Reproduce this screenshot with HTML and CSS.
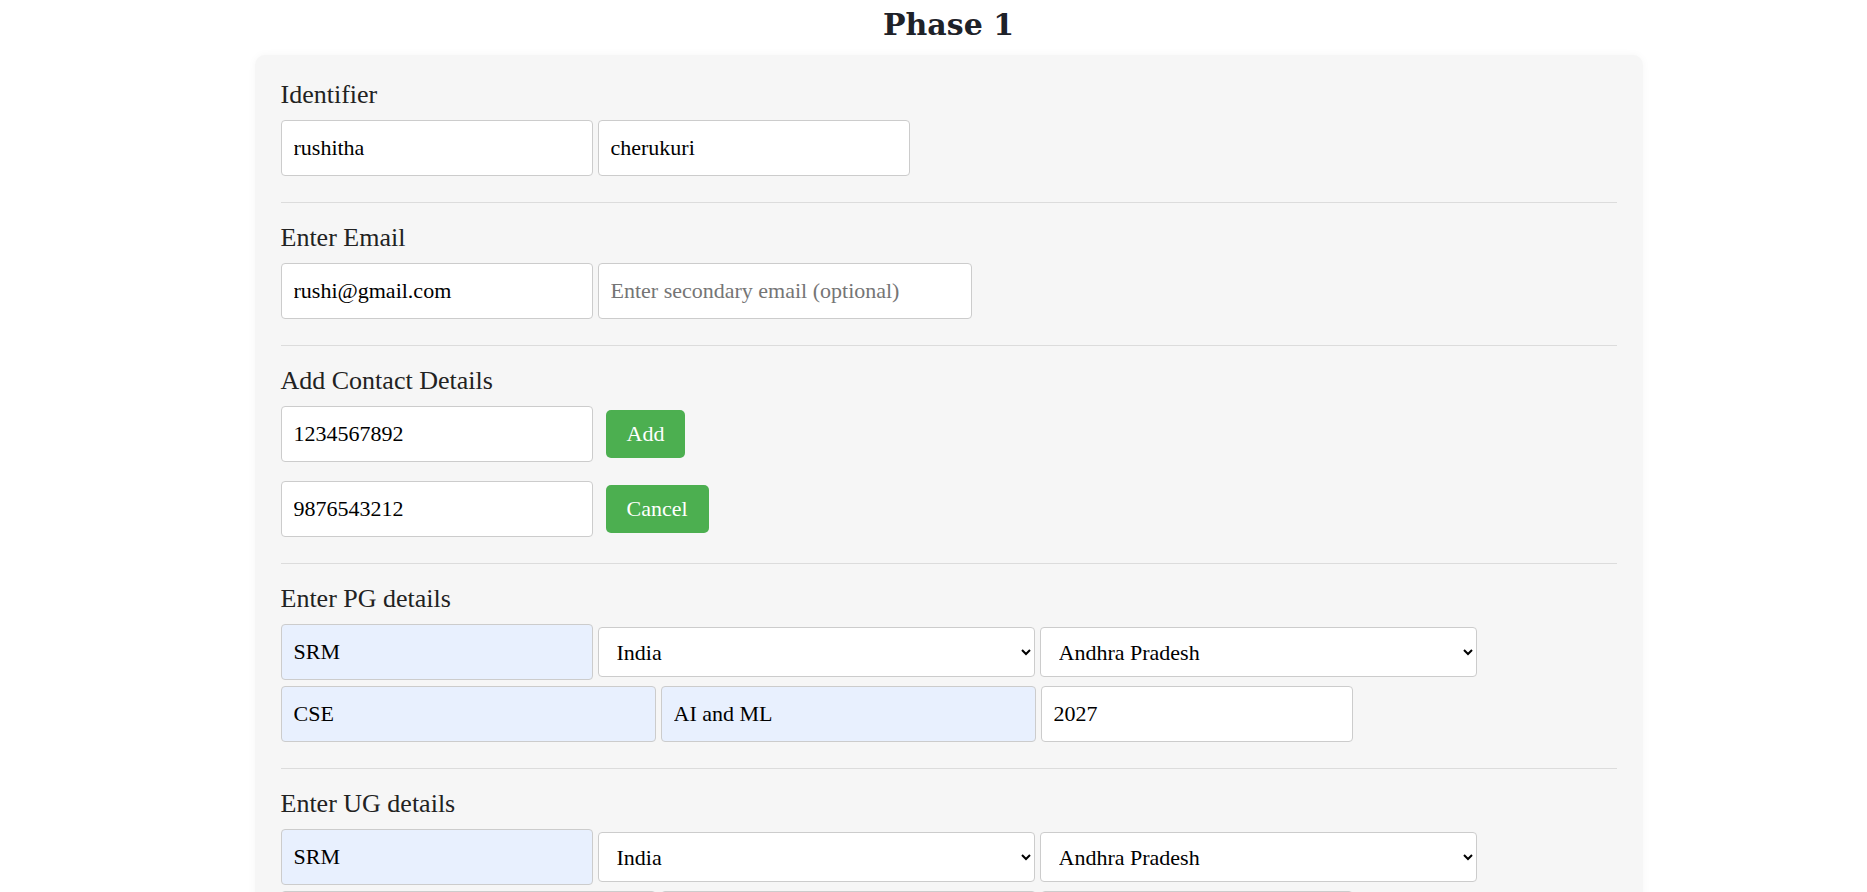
FILE: index.html
```html
<!DOCTYPE html>
<html lang="en">
<head>
<meta charset="utf-8">
<title>Phase 1</title>
<link rel="stylesheet" href="styles.css">
</head>
<body>
<h1 class="title">Phase 1</h1>
<div class="card">
  <section class="group first">
    <div class="label">Identifier</div>
    <div class="row">
      <input class="field" type="text" value="rushitha">
      <input class="field" type="text" value="cherukuri">
    </div>
  </section>

  <section class="group">
    <div class="label">Enter Email</div>
    <div class="row">
      <input class="field" type="email" value="rushi@gmail.com">
      <input class="field wide" type="email" placeholder="Enter secondary email (optional)">
    </div>
  </section>

  <section class="group">
    <div class="label">Add Contact Details</div>
    <div class="row contact">
      <input class="field" type="text" value="1234567892">
      <button class="btn" type="button">Add</button>
    </div>
    <div class="row contact next">
      <input class="field" type="text" value="9876543212">
      <button class="btn" type="button">Cancel</button>
    </div>
  </section>

  <section class="group">
    <div class="label">Enter PG details</div>
    <div class="row">
      <input class="field filled" type="text" value="SRM">
      <select class="pick"><option>India</option></select>
      <select class="pick"><option>Andhra Pradesh</option></select>
    </div>
    <div class="row tight">
      <input class="field mid filled" type="text" value="CSE">
      <input class="field mid filled" type="text" value="AI and ML">
      <input class="field" type="text" value="2027">
    </div>
  </section>

  <section class="group">
    <div class="label">Enter UG details</div>
    <div class="row">
      <input class="field filled" type="text" value="SRM">
      <select class="pick"><option>India</option></select>
      <select class="pick"><option>Andhra Pradesh</option></select>
    </div>
    <div class="row tight">
      <input class="field mid filled" type="text" value="CSE">
      <input class="field mid filled" type="text" value="AI and ML">
      <input class="field" type="text" value="2023">
    </div>
  </section>
</div>
</body>
</html>
```

FILE: styles.css
```css
html, body {
  margin: 0;
  background: #ffffff;
}

body {
  padding: 0 0 40px 30px;
  font-family: "Liberation Serif", "Times New Roman", serif;
  color: #222222;
}

.title {
  margin: 0;
  padding: 7px 0 12px;
  line-height: 36px;
  font-family: "DejaVu Serif", "Liberation Serif", serif;
  font-size: 30px;
  font-weight: bold;
  text-align: center;
  color: #1e2229;
}

.card {
  width: 1388px;
  box-sizing: border-box;
  margin: 0 auto;
  padding: 0 26px;
  background: #f6f6f6;
  border-radius: 10px;
  box-shadow: 0 0 8px rgba(0, 0, 0, 0.04);
}

.group {
  padding: 20px 0 26px;
  border-bottom: 1px solid #dcdcdc;
}

.group.first {
  padding-top: 25px;
}

.label {
  font-size: 26px;
  line-height: 30px;
  margin-bottom: 10px;
  color: #222222;
}

.row {
  display: flex;
  align-items: center;
  gap: 5px;
}

.row.next {
  margin-top: 19px;
}

.row.tight {
  margin-top: 6px;
}

.row.contact {
  gap: 13px;
}

.field {
  box-sizing: border-box;
  width: 312px;
  height: 56px;
  margin: 0;
  padding: 0 12px;
  border: 1px solid #cccccc;
  border-radius: 4px;
  background: #ffffff;
  font-family: "Liberation Serif", "Times New Roman", serif;
  font-size: 22px;
  color: #000000;
}

.field::placeholder {
  color: #757575;
}

.field.wide {
  width: 374px;
}

.field.mid {
  width: 375px;
}

.field.filled {
  background: #e8f0fe;
}

.pick {
  box-sizing: border-box;
  width: 437px;
  height: 50px;
  margin: 0;
  padding: 0 8px 0 14px;
  border: 1px solid #cccccc;
  border-radius: 4px;
  background-color: #ffffff;
  font-family: "Liberation Serif", "Times New Roman", serif;
  font-size: 22px;
  color: #000000;
}

.btn {
  height: 48px;
  margin: 0;
  padding: 0 21px;
  border: none;
  border-radius: 5px;
  background: #4caf50;
  color: #ffffff;
  font-family: "Liberation Serif", "Times New Roman", serif;
  font-size: 22px;
  line-height: 46px;
}
```
